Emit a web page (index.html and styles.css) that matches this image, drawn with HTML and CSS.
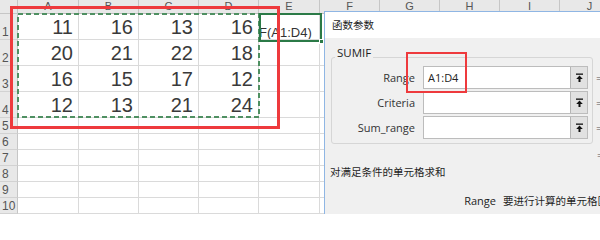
FILE: index.html
```html
<!DOCTYPE html>
<html lang="zh-CN">
<head>
<meta charset="utf-8">
<title>SUMIF</title>
<link rel="stylesheet" href="styles.css">
</head>
<body>
<div class="sheet">
  <div class="colhdr">
    <div class="corner"></div>
    <div class="ch w61">A</div>
    <div class="ch">B</div>
    <div class="ch">C</div>
    <div class="ch">D</div>
    <div class="ch w61">E</div>
    <div class="ch">F</div>
    <div class="ch">G</div>
    <div class="ch">H</div>
    <div class="ch">I</div>
    <div class="ch">J</div>
  </div>
  <div class="rows">
    <div class="rh tall">1</div><div class="c n">11</div><div class="c n">16</div><div class="c n">13</div><div class="c n">16</div><div class="c formula">F(A1:D4)</div><div class="c"></div>
    <div class="rh tall">2</div><div class="c n">20</div><div class="c n">21</div><div class="c n">22</div><div class="c n">18</div><div class="c"></div><div class="c"></div>
    <div class="rh tall">3</div><div class="c n">16</div><div class="c n">15</div><div class="c n">17</div><div class="c n">12</div><div class="c"></div><div class="c"></div>
    <div class="rh tall">4</div><div class="c n">12</div><div class="c n">13</div><div class="c n">21</div><div class="c n">24</div><div class="c"></div><div class="c"></div>
    <div class="rh">5</div><div class="c"></div><div class="c"></div><div class="c"></div><div class="c"></div><div class="c"></div><div class="c"></div>
    <div class="rh">6</div><div class="c"></div><div class="c"></div><div class="c"></div><div class="c"></div><div class="c"></div><div class="c"></div>
    <div class="rh">7</div><div class="c"></div><div class="c"></div><div class="c"></div><div class="c"></div><div class="c"></div><div class="c"></div>
    <div class="rh">8</div><div class="c"></div><div class="c"></div><div class="c"></div><div class="c"></div><div class="c"></div><div class="c"></div>
    <div class="rh">9</div><div class="c"></div><div class="c"></div><div class="c"></div><div class="c"></div><div class="c"></div><div class="c"></div>
    <div class="rh">10</div><div class="c"></div><div class="c"></div><div class="c"></div><div class="c"></div><div class="c"></div><div class="c"></div>
  </div>
</div>

<svg class="ants" width="244" height="106" viewBox="0 0 244 106">
  <rect x="1" y="1" width="241" height="103" fill="none" stroke="#4f9062" stroke-width="2" stroke-dasharray="5 3"/>
</svg>
<div class="active-cell"><span class="handle"></span></div>
<div class="red-box sheet-mark"></div>

<div class="dialog">
  <div class="dlg-title">函数参数</div>
  <div class="dlg-body">
    <div class="group">
      <div class="legend">SUMIF</div>
      <div class="field">
        <span class="lbl">Range</span>
        <span class="input"><span class="val">A1:D4</span><span class="btn"><svg width="9" height="10" viewBox="0 0 9 10"><rect x="1" y="0.5" width="7" height="1.3" fill="#111"/><path d="M4.5 2.6 L1.2 6 L3.5 6 L3.5 9 L5.5 9 L5.5 6 L7.8 6 Z" fill="#111"/></svg></span></span>
        <span class="eq">=</span>
      </div>
      <div class="field">
        <span class="lbl">Criteria</span>
        <span class="input"><span class="val"></span><span class="btn"><svg width="9" height="10" viewBox="0 0 9 10"><rect x="1" y="0.5" width="7" height="1.3" fill="#111"/><path d="M4.5 2.6 L1.2 6 L3.5 6 L3.5 9 L5.5 9 L5.5 6 L7.8 6 Z" fill="#111"/></svg></span></span>
        <span class="eq">=</span>
      </div>
      <div class="field">
        <span class="lbl">Sum_range</span>
        <span class="input"><span class="val"></span><span class="btn"><svg width="9" height="10" viewBox="0 0 9 10"><rect x="1" y="0.5" width="7" height="1.3" fill="#111"/><path d="M4.5 2.6 L1.2 6 L3.5 6 L3.5 9 L5.5 9 L5.5 6 L7.8 6 Z" fill="#111"/></svg></span></span>
        <span class="eq">=</span>
      </div>
    </div>
    <div class="result">=</div>
    <div class="desc">对满足条件的单元格求和</div>
    <div class="arg-help"><span class="arg-name">Range</span><span class="arg-text">要进行计算的单元格区域</span></div>
  </div>
</div>
<div class="red-box dlg-mark"></div>
</body>
</html>
```

FILE: styles.css
```css
* { box-sizing: border-box; }

body {
  margin: 0;
  width: 600px;
  height: 214px;
  overflow: hidden;
  position: relative;
  background: #fff;
  font-family: "Liberation Sans", Arial, sans-serif;
}

.sheet { width: 620px; }

.colhdr {
  display: flex;
  height: 14px;
  background: #e8e8e8;
}
.corner {
  width: 18px;
  flex: none;
  border-right: 1px solid #c6c6c6;
  border-bottom: 1px solid #c6c6c6;
}
.ch {
  width: 60px;
  flex: none;
  border-right: 1px solid #c6c6c6;
  border-bottom: 1px solid #bdbdbd;
  color: #555;
  font-size: 11px;
  line-height: 13px;
  text-align: center;
  overflow: hidden;
}
.ch.w61 { width: 61px; }

.rows {
  display: grid;
  grid-template-columns: 18px 61px 60px 60px 60px 61px 60px;
  grid-template-rows: repeat(4, 26px) repeat(6, 16px);
}
.rh {
  background: #e8e8e8;
  border-right: 1px solid #c6c6c6;
  border-bottom: 1px solid #d2d2d2;
  color: #555;
  font-size: 12px;
  line-height: 14px;
  padding-left: 2px;
  display: flex;
  align-items: flex-end;
  overflow: hidden;
}
.c {
  border-right: 1px solid #dadada;
  border-bottom: 1px solid #dadada;
  overflow: hidden;
}
.n {
  font-size: 20px;
  line-height: 23px;
  color: #3a3a3a;
  text-align: right;
  padding-right: 5px;
  display: flex;
  align-items: flex-end;
  justify-content: flex-end;
}
.formula {
  font-size: 13px;
  color: #333;
  line-height: 15px;
  padding-top: 11px;
  padding-left: 0;
  white-space: nowrap;
}

.ants {
  position: absolute;
  left: 17px;
  top: 13px;
}
.active-cell {
  position: absolute;
  left: 259px;
  top: 13px;
  width: 63px;
  height: 29px;
  border: 2px solid #2b7a47;
}
.handle {
  position: absolute;
  right: -4px;
  bottom: -4px;
  width: 5px;
  height: 5px;
  background: #2b7a47;
  border: 1px solid #fff;
}
.red-box {
  position: absolute;
  border: 3px solid #ee3a3d;
}
.sheet-mark {
  left: 10px;
  top: 6px;
  width: 270px;
  height: 123px;
}
.dlg-mark {
  left: 406px;
  top: 52px;
  width: 61px;
  height: 41px;
  border-width: 2.5px;
}

.dialog {
  position: absolute;
  left: 324px;
  top: 11px;
  width: 300px;
  height: 220px;
  border: 1px solid #8fb6e4;
  background: #f0f0f0;
  font-family: "Open Sans", "Noto Sans CJK SC", sans-serif;
  font-size: 11px;
  color: #1e1e1e;
}
.dlg-title {
  height: 26px;
  background: #fff;
  padding-left: 7px;
  line-height: 26px;
  font-family: "Noto Sans CJK SC", sans-serif;
  font-size: 10.5px;
}
.dlg-body {
  padding: 19px 0 0 6px;
}
.group {
  position: relative;
  width: 262px;
  border: 1px solid #d6d6d6;
  border-radius: 3px;
  padding: 8px 0 4px 0;
}
.legend {
  position: absolute;
  left: 3px;
  top: -12px;
  padding: 0 2px;
  background: #f0f0f0;
  line-height: 14px;
  font-size: 11.5px;
}
.field {
  display: flex;
  align-items: center;
  height: 23px;
  margin-bottom: 2px;
}
.field:last-child { margin-bottom: 0; }
.lbl {
  width: 83px;
  flex: none;
  text-align: right;
  color: #333;
}
.input {
  margin-left: 8px;
  width: 165px;
  height: 23px;
  flex: none;
  display: flex;
  background: #fff;
  border: 1px solid #bcbcbc;
}
.val {
  flex: 1;
  padding-left: 4px;
  line-height: 21px;
  color: #222;
}
.btn {
  width: 17px;
  flex: none;
  background: #e1e1e1;
  border-left: 1px solid #b5b5b5;
  display: flex;
  align-items: center;
  justify-content: center;
}
.eq {
  margin-left: 8px;
  color: #555;
}
.result {
  margin-top: 3px;
  line-height: 16px;
  padding-left: 266px;
  color: #555;
}
.desc {
  margin-top: 1px;
  margin-left: -1px;
  line-height: 16px;
  font-family: "Noto Sans CJK SC", sans-serif;
  font-size: 10.5px;
}
.arg-help {
  display: flex;
  margin-top: 13px;
  line-height: 16px;
  white-space: nowrap;
}
.arg-name {
  width: 165px;
  flex: none;
  text-align: right;
}
.arg-text {
  margin-left: 7px;
  font-family: "Noto Sans CJK SC", sans-serif;
  font-size: 10.5px;
}
```
